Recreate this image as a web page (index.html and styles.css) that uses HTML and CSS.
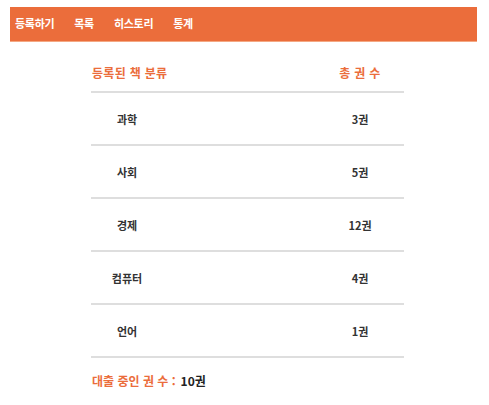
FILE: index.html
```html
<!DOCTYPE html>
<html lang="ko">
<head>
<meta charset="utf-8">
<link rel="stylesheet" href="styles.css">
</head>
<body>
<nav class="nav">
  <a class="nav-item">등록하기</a>
  <a class="nav-item">목록</a>
  <a class="nav-item">히스토리</a>
  <a class="nav-item">통계</a>
</nav>
<main class="stats">
  <div class="row head">
    <div class="cell name">등록된 책 분류</div>
    <div class="cell count">총 권 수</div>
  </div>
  <div class="row">
    <div class="cell name">과학</div>
    <div class="cell count">3권</div>
  </div>
  <div class="row">
    <div class="cell name">사회</div>
    <div class="cell count">5권</div>
  </div>
  <div class="row">
    <div class="cell name">경제</div>
    <div class="cell count">12권</div>
  </div>
  <div class="row">
    <div class="cell name">컴퓨터</div>
    <div class="cell count">4권</div>
  </div>
  <div class="row">
    <div class="cell name">언어</div>
    <div class="cell count">1권</div>
  </div>
  <p class="summary"><span class="summary-label">대출 중인 권 수 :</span><span class="summary-value">10권</span></p>
</main>
</body>
</html>
```
FILE: styles.css
```css
* { box-sizing: border-box; }
body {
  margin: 0;
  font-family: "Noto Sans CJK KR", "Noto Sans", sans-serif;
  font-weight: 700;
  color: #333;
  background: #fff;
}
.nav {
  margin: 7px 12px 0 10px;
  height: 35px;
  background: #eb6d3b;
  border-bottom: 1px solid #f4a883;
  display: flex;
  align-items: center;
  gap: 20px;
  padding: 0 0 2px 5px;
}
.nav-item {
  color: #fff;
  font-size: 11px;
  line-height: 16px;
  letter-spacing: -0.3px;
}
.stats {
  margin: 12px 0 0 91px;
  width: 313px;
}
.row {
  display: flex;
  justify-content: space-between;
  align-items: center;
  height: 53px;
  border-bottom: 2px solid #dedede;
  font-size: 11px;
}
.row.head {
  height: 39px;
  color: #eb6d3b;
  font-size: 12px;
  letter-spacing: 0.3px;
}
.cell { text-align: center; line-height: 16px; white-space: nowrap; }
.name { width: 72px; }
.count { width: 88px; }
.head .name { text-align: left; padding-left: 1px; }
.summary {
  margin: 15px 0 0 1px;
  font-size: 12px;
  line-height: 16px;
  display: flex;
  gap: 5px;
  white-space: nowrap;
}
.summary-label { color: #eb6d3b; letter-spacing: 0; }
.summary-value { color: #222; }
```
